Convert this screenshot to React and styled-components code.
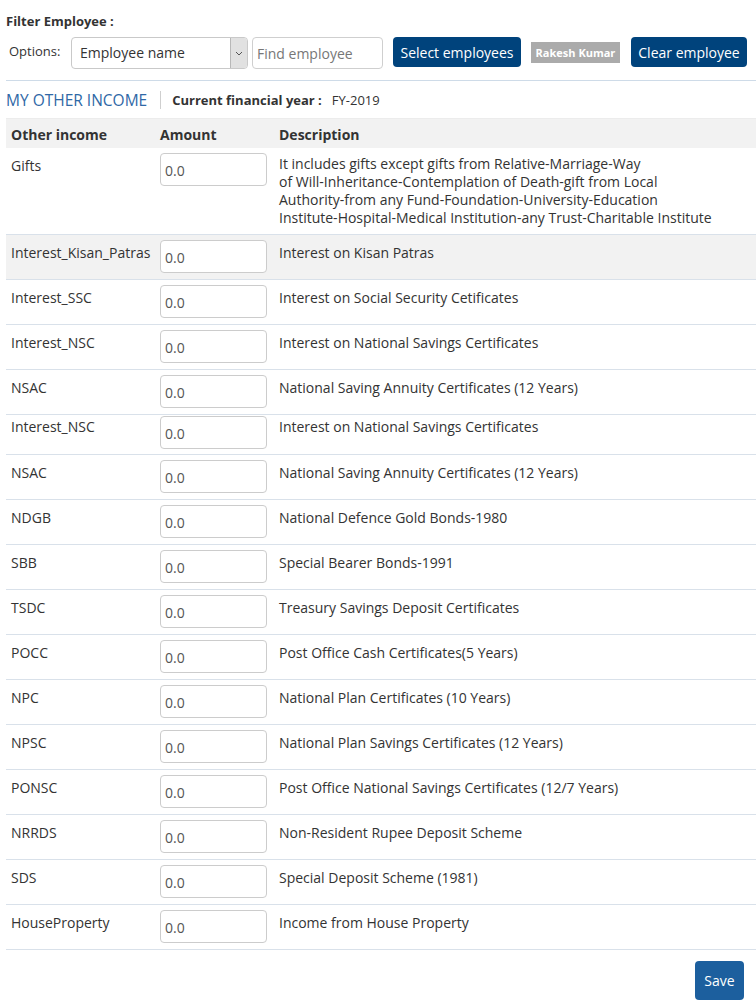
import React from "react"
import styled, { createGlobalStyle } from "styled-components"

const Global = createGlobalStyle`
  body {
    margin: 0;
    background: #fff;
    font-family: "Open Sans", "Liberation Sans", sans-serif;
    color: #333;
  }
`

const Page = styled.div`
  width: 756px;
  padding-left: 6px;
  box-sizing: border-box;
  overflow: hidden;
`

const FilterTitle = styled.div`
  padding-top: 13px;
  font-size: 13px;
  font-weight: 700;
  line-height: 16px;
`

const OptionsRow = styled.div`
  display: flex;
  align-items: flex-start;
  margin-top: 8px;
  height: 32px;
`

const OptionsLabel = styled.span`
  width: 62px;
  padding-left: 3px;
  font-size: 13px;
  line-height: 28px;
`

const SelectBox = styled.div`
  width: 177px;
  height: 32px;
  box-sizing: border-box;
  border: 1px solid #c9c9c9;
  border-radius: 4px;
  display: flex;
  overflow: hidden;
`

const SelectText = styled.span`
  flex: 1;
  padding-left: 8px;
  font-size: 14px;
  line-height: 30px;
  color: #333;
`

const SelectArrow = styled.span`
  width: 16px;
  background: #e1e1e1;
  border-left: 1px solid #b8b8b8;
  display: flex;
  align-items: center;
  justify-content: center;
`

const FindInput = styled.input`
  margin-left: 4px;
  width: 131px;
  height: 32px;
  box-sizing: border-box;
  border: 1px solid #cfcfcf;
  border-radius: 4px;
  padding: 0 4px;
  font-family: "Open Sans", "Liberation Sans", sans-serif;
  font-size: 14px;
  color: #333;
  &::placeholder { color: #777; }
`

const Button = styled.button`
  margin-left: ${({ gap }) => gap}px;
  width: ${({ w }) => w}px;
  height: 30px;
  border: none;
  border-radius: 4px;
  background: #00437c;
  color: #fff;
  font-family: "Open Sans", "Liberation Sans", sans-serif;
  font-size: 14px;
  padding: 0;
`

const Badge = styled.span`
  margin-left: 10px;
  margin-top: 5px;
  width: 89px;
  height: 21px;
  background: #ababab;
  color: #fff;
  font-size: 11px;
  font-weight: 700;
  line-height: 21px;
  text-align: center;
`

const Divider = styled.div`
  margin-top: 11px;
  border-top: 1px solid #cedbe8;
`

const SectionHead = styled.div`
  height: 37px;
  display: flex;
  align-items: center;
  border-bottom: 1px solid #ececec;
`

const SectionTitle = styled.span`
  font-size: 15.5px;
  color: #2f68a6;
  padding-right: 13px;
  border-right: 1px solid #cfcfcf;
  line-height: 18px;
`

const YearLabel = styled.span`
  margin-left: 11px;
  font-size: 13px;
  font-weight: 700;
`

const YearValue = styled.span`
  margin-left: 10px;
  font-size: 13px;
`

const Table = styled.table`
  width: 750px;
  border-collapse: collapse;
  table-layout: fixed;
  font-size: 14px;
`

const Th = styled.th`
  height: 29px;
  padding: 1px 5px 0;
  text-align: left;
  font-weight: 700;
  background: #f2f2f2;
  width: ${({ w }) => (w ? `${w}px` : "auto")};
  box-sizing: border-box;
`

const Tr = styled.tr`
  background: ${({ shaded }) => (shaded ? "#f2f2f2" : "#fff")};
  border-bottom: 1px solid #d9e1ea;
`

const LabelCell = styled.td`
  vertical-align: top;
  padding: ${({ tight }) => (tight ? "2px" : "8px")} 5px 0;
  line-height: 20px;
  white-space: nowrap;
`

const AmountCell = styled.td`
  vertical-align: top;
  padding: ${({ tight }) => (tight ? "1px 5px 5px" : "5px 5px 6px")};
`

const DescCell = styled.td`
  vertical-align: top;
  padding: ${({ tight, multi }) => (multi ? "7px 5px 7px" : tight ? "2px 5px 0" : "8px 5px 0")};
  line-height: ${({ multi }) => (multi ? "18px" : "20px")};
`

const AmountInput = styled.input`
  width: 107px;
  height: 33px;
  box-sizing: border-box;
  border: 1px solid #cccccc;
  border-radius: 4px;
  padding: 2px 4px 0;
  font-family: "Open Sans", "Liberation Sans", sans-serif;
  font-size: 14px;
  color: #555;
  display: block;
`

const Footer = styled.div`
  display: flex;
  justify-content: flex-end;
  padding: 11px 12px 0 0;
`

const SaveButton = styled.button`
  width: 49px;
  height: 39px;
  border: none;
  border-radius: 4px;
  background: #1c5f9e;
  color: #fff;
  font-family: "Open Sans", "Liberation Sans", sans-serif;
  font-size: 14px;
  padding: 0;
`

const rows = [
  { label: "Interest_Kisan_Patras", desc: "Interest on Kisan Patras", shaded: true },
  { label: "Interest_SSC", desc: "Interest on Social Security Cetificates" },
  { label: "Interest_NSC", desc: "Interest on National Savings Certificates" },
  { label: "NSAC", desc: "National Saving Annuity Certificates (12 Years)" },
  { label: "Interest_NSC", desc: "Interest on National Savings Certificates", tight: true },
  { label: "NSAC", desc: "National Saving Annuity Certificates (12 Years)" },
  { label: "NDGB", desc: "National Defence Gold Bonds-1980" },
  { label: "SBB", desc: "Special Bearer Bonds-1991" },
  { label: "TSDC", desc: "Treasury Savings Deposit Certificates" },
  { label: "POCC", desc: "Post Office Cash Certificates(5 Years)" },
  { label: "NPC", desc: "National Plan Certificates (10 Years)" },
  { label: "NPSC", desc: "National Plan Savings Certificates (12 Years)" },
  { label: "PONSC", desc: "Post Office National Savings Certificates (12/7 Years)" },
  { label: "NRRDS", desc: "Non-Resident Rupee Deposit Scheme" },
  { label: "SDS", desc: "Special Deposit Scheme (1981)" },
  { label: "HouseProperty", desc: "Income from House Property" },
]

const giftLines = [
  "It includes gifts except gifts from Relative-Marriage-Way",
  "of Will-Inheritance-Contemplation of Death-gift from Local",
  "Authority-from any Fund-Foundation-University-Education",
  "Institute-Hospital-Medical Institution-any Trust-Charitable Institute",
]

export default function App() {
  return (
    <Page>
      <Global />
      <FilterTitle>Filter Employee :</FilterTitle>
      <OptionsRow>
        <OptionsLabel>Options:</OptionsLabel>
        <SelectBox>
          <SelectText>Employee name</SelectText>
          <SelectArrow>
            <svg width="8" height="5" viewBox="0 0 8 5">
              <path d="M1 1l3 3 3-3" fill="none" stroke="#555" strokeWidth="1" />
            </svg>
          </SelectArrow>
        </SelectBox>
        <FindInput placeholder="Find employee" />
        <Button gap={10} w={128}>Select employees</Button>
        <Badge>Rakesh Kumar</Badge>
        <Button gap={11} w={116}>Clear employee</Button>
      </OptionsRow>
      <Divider />
      <SectionHead>
        <SectionTitle>MY OTHER INCOME</SectionTitle>
        <YearLabel>Current financial year :</YearLabel>
        <YearValue>FY-2019</YearValue>
      </SectionHead>
      <Table>
        <thead>
          <tr>
            <Th w={149}>Other income</Th>
            <Th w={119}>Amount</Th>
            <Th>Description</Th>
          </tr>
        </thead>
        <tbody>
          <Tr>
            <LabelCell>Gifts</LabelCell>
            <AmountCell><AmountInput defaultValue="0.0" /></AmountCell>
            <DescCell multi>
              {giftLines.map((l, i) => <div key={i}>{l}</div>)}
            </DescCell>
          </Tr>
          {rows.map((r, i) => (
            <Tr key={i} shaded={r.shaded}>
              <LabelCell tight={r.tight}>{r.label}</LabelCell>
              <AmountCell tight={r.tight}><AmountInput defaultValue="0.0" /></AmountCell>
              <DescCell tight={r.tight}>{r.desc}</DescCell>
            </Tr>
          ))}
        </tbody>
      </Table>
      <Footer>
        <SaveButton>Save</SaveButton>
      </Footer>
    </Page>
  )
}
